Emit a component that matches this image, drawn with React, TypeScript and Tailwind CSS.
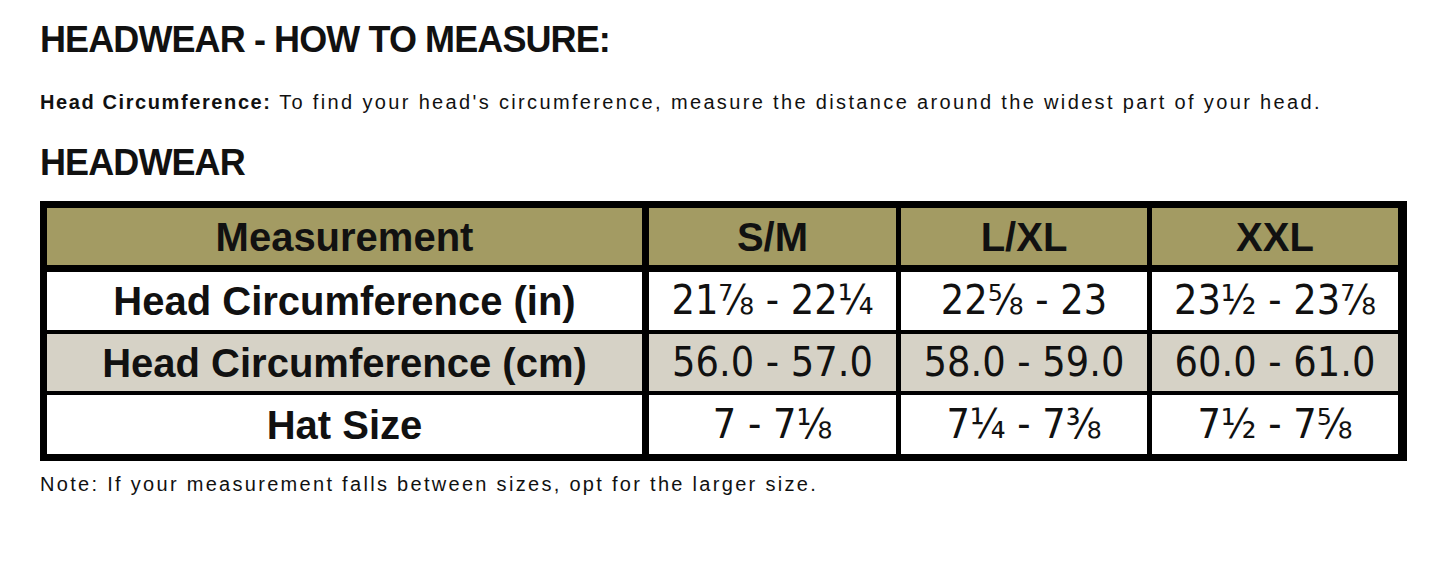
import React from 'react';

const SANS = "font-['Liberation_Sans',Arial,sans-serif]";
const NARROW = "font-['DejaVu_Sans_Condensed','Liberation_Sans',sans-serif]";

interface SizeRow {
  label: string;
  values: string[];
  shaded?: boolean;
  height: string;
}

const SIZES = ['S/M', 'L/XL', 'XXL'];

const ROWS: SizeRow[] = [
  { label: 'Head Circumference (in)', values: ['21⅞ - 22¼', '22⅝ - 23', '23½ - 23⅞'], height: 'h-[58px]' },
  { label: 'Head Circumference (cm)', values: ['56.0 - 57.0', '58.0 - 59.0', '60.0 - 61.0'], shaded: true, height: 'h-[57px]' },
  { label: 'Hat Size', values: ['7 - 7⅛', '7¼ - 7⅜', '7½ - 7⅝'], height: 'h-[59px]' },
];

export default function App() {
  return (
    <div className={`w-[1445px] h-[568px] bg-white text-[#111] pl-[40px] pt-[20px] ${SANS}`}>
      <h1 className="text-[36px] leading-[40px] font-bold tracking-[-0.9px]">
        HEADWEAR - HOW TO MEASURE:
      </h1>

      <p className="mt-[30px] text-[20px] leading-[24px] tracking-[2.35px]">
        <span className="font-bold tracking-[1.6px]">Head Circumference:</span> To find your head's circumference, measure the distance around the widest part of your head.
      </p>

      <h2 className="mt-[29px] text-[36px] leading-[40px] font-bold tracking-[-0.9px]">
        HEADWEAR
      </h2>

      {/* Size table */}
      <div className="mt-[18px] w-[1367px] bg-black p-[7px] pr-[8px] flex flex-col">
        <div className="flex gap-[5px] h-[57px] mb-[7px]">
          <div className="w-[595px] mr-[2px] bg-[#a39b63] flex items-center justify-center text-[40px] font-bold">
            Measurement
          </div>
          {SIZES.map((s, j) => (
            <div key={s} className={`${j === 0 ? 'w-[247px]' : 'w-[246px]'} bg-[#a39b63] flex items-center justify-center text-[40px] font-bold`}>
              {s}
            </div>
          ))}
        </div>

        {ROWS.map((row, i) => (
          <div key={row.label} className={`flex gap-[5px] ${row.height} ${i < ROWS.length - 1 ? 'mb-[4px]' : ''}`}>
            <div className={`w-[595px] mr-[2px] flex items-center justify-center text-[40px] font-bold ${row.shaded ? 'bg-[#d6d2c6]' : 'bg-white'}`}>
              {row.label}
            </div>
            {row.values.map((v, j) => (
              <div
                key={j}
                className={`${j === 0 ? 'w-[247px]' : 'w-[246px]'} flex items-center justify-center text-[41px] ${NARROW} ${row.shaded ? 'bg-[#d6d2c6]' : 'bg-white'}`}
              >
                {v}
              </div>
            ))}
          </div>
        ))}
      </div>

      <p className="mt-[11px] text-[20px] leading-[24px] tracking-[2.3px]">
        Note: If your measurement falls between sizes, opt for the larger size.
      </p>
    </div>
  );
}
